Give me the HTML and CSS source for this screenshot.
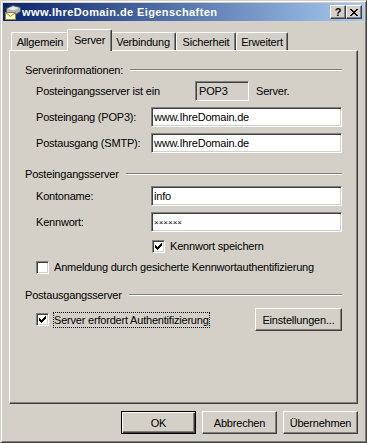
FILE: index.html
```html
<!DOCTYPE html>
<html lang="de">
<head>
<meta charset="UTF-8">
<title>www.IhreDomain.de Eigenschaften</title>
<link rel="stylesheet" href="styles.css">
</head>
<body>
<div class="window">
    <div class="titlebar">
        <svg class="app-icon" viewBox="0 0 16 16">
            <path d="M1.5 4.5 L8 1.5 L15.5 3.5 L15.5 7.5 L9 11.5 L1.5 8.5 Z" fill="#b4b4b4" stroke="#5a5a5a"/>
            <path d="M2.5 4.5 L8 2.5 L14 4 L8.5 6.5 Z" fill="#e8e8e8"/>
            <rect x="0.5" y="8.5" width="10" height="7" fill="#ffffc8" stroke="#8a8650"/>
            <path d="M0.5 8.5 L5.5 12.5 L10.5 8.5" fill="none" stroke="#8a8650"/>
        </svg>
        <span class="title">www.IhreDomain.de Eigenschaften</span>
        <div class="caption-buttons">
            <span class="cap-btn">?</span>
            <span class="cap-btn">
                <svg width="8" height="7" viewBox="0 0 8 7"><path d="M0 0h2v1h-2z M6 0h2v1h-2z M1 1h2v1h-2z M5 1h2v1h-2z M2 2h4v1h-4z M3 3h2v1h-2z M2 4h4v1h-4z M1 5h2v1h-2z M5 5h2v1h-2z M0 6h2v1h-2z M6 6h2v1h-2z" fill="#000"/></svg>
            </span>
        </div>
    </div>

    <div class="body">
        <div class="tabs">
            <div class="tab tab-general">Allgemein</div>
            <div class="tab tab-server active">Server</div>
            <div class="tab tab-conn">Verbindung</div>
            <div class="tab tab-security">Sicherheit</div>
            <div class="tab tab-advanced">Erweitert</div>
        </div>

        <div class="panel">
            <div class="group-head"><span>Serverinformationen:</span><i class="etch"></i></div>
            <div class="row info-row">
                <span class="label">Posteingangsserver ist ein</span>
                <span class="readonly">POP3</span>
                <span class="suffix">Server.</span>
            </div>
            <div class="row field-row">
                <span class="label">Posteingang (POP3):</span>
                <div class="edit">www.IhreDomain.de</div>
            </div>
            <div class="row field-row">
                <span class="label">Postausgang (SMTP):</span>
                <div class="edit">www.IhreDomain.de</div>
            </div>

            <div class="group-head"><span>Posteingangsserver</span><i class="etch"></i></div>
            <div class="row field-row">
                <span class="label">Kontoname:</span>
                <div class="edit">info</div>
            </div>
            <div class="row field-row">
                <span class="label">Kennwort:</span>
                <div class="edit"><span class="masked">××××××</span></div>
            </div>
            <div class="row check-row save-row">
                <span class="check"><svg viewBox="0 0 11 11"><path d="M8 2h1v1h-1z M7 3h2v1h-2z M2 4h1v1h-1z M6 4h3v1h-3z M2 5h2v1h-2z M5 5h3v1h-3z M2 6h5v1h-5z M3 7h3v1h-3z M4 8h1v1h-1z" fill="#000"/></svg></span>
                <span>Kennwort speichern</span>
            </div>
            <div class="row check-row spa-row">
                <span class="check"></span>
                <span>Anmeldung durch gesicherte Kennwortauthentifizierung</span>
            </div>

            <div class="group-head"><span>Postausgangsserver</span><i class="etch"></i></div>
            <div class="row auth-row">
                <span class="check"><svg viewBox="0 0 11 11"><path d="M8 2h1v1h-1z M7 3h2v1h-2z M2 4h1v1h-1z M6 4h3v1h-3z M2 5h2v1h-2z M5 5h3v1h-3z M2 6h5v1h-5z M3 7h3v1h-3z M4 8h1v1h-1z" fill="#000"/></svg></span>
                <span class="focus-label">Server erfordert Authentifizierung</span>
                <button class="btn btn-settings">Einstellungen...</button>
            </div>
        </div>

        <div class="dialog-buttons">
            <button class="btn default">OK</button>
            <button class="btn">Abbrechen</button>
            <button class="btn">Übernehmen</button>
        </div>
    </div>
</div>
</body>
</html>
```

FILE: styles.css
```css
body {
    margin: 0;
    font-family: "Liberation Sans", Arial, sans-serif;
    font-size: 11px;
    letter-spacing: -0.2px;
    color: #000;
    background-color: #d4d0c8;
}
.window {
    width: 367px;
    height: 443px;
    box-sizing: border-box;
    padding: 2px;
    background-color: #d4d0c8;
    border: 1px solid;
    border-color: #d4d0c8 #404040 #404040 #d4d0c8;
    box-shadow: inset 1px 1px #fff, inset -1px -1px #808080;
}

/* Titelleiste */
.titlebar {
    height: 18px;
    display: flex;
    align-items: center;
    padding: 0 2px;
    background: linear-gradient(to right, #0a246a, #a6caf0);
}
.app-icon {
    width: 16px;
    height: 16px;
    flex: none;
    margin-right: 1px;
}
.title {
    flex: 1;
    color: #fff;
    font-weight: bold;
    letter-spacing: 0.4px;
}
.caption-buttons {
    display: flex;
}
.cap-btn {
    width: 16px;
    height: 14px;
    box-sizing: border-box;
    display: flex;
    align-items: center;
    justify-content: center;
    background-color: #d4d0c8;
    border: 1px solid;
    border-color: #fff #404040 #404040 #fff;
    box-shadow: inset -1px -1px #808080;
    font-weight: bold;
    letter-spacing: 0;
}

/* Registerkarten */
.body {
    padding: 0 6px;
}
.tabs {
    display: flex;
    align-items: flex-end;
    height: 21px;
    margin-top: 8px;
    padding-left: 2px;
}
.tab {
    height: 18px;
    box-sizing: border-box;
    display: flex;
    align-items: center;
    justify-content: center;
    border: 1px solid;
    border-bottom: 0;
    border-color: #fff #404040 transparent #fff;
    border-radius: 2px 2px 0 0;
    box-shadow: inset -1px 0 #808080;
}
.tab.active {
    height: 22px;
    margin: 0 -2px -1px;
    padding-bottom: 2px;
    position: relative;
    z-index: 1;
    background-color: #d4d0c8;
}
.tab-general { width: 58px; }
.tab-server { width: 45px; }
.tab-conn { width: 66px; }
.tab-security { width: 60px; }
.tab-advanced { width: 52px; }

.panel {
    height: 354px;
    box-sizing: border-box;
    padding: 12px 15px 0 15px;
    border: 1px solid;
    border-color: #fff #404040 #404040 #fff;
    box-shadow: inset -1px -1px #808080;
}

/* Gruppen */
.group-head {
    display: flex;
    align-items: center;
    height: 14px;
    line-height: 14px;
    margin-top: 14px;
}
.group-head:first-child {
    margin-top: 0;
}
.etch {
    flex: 1;
    margin-left: 7px;
    border-top: 1px solid #808080;
    border-bottom: 1px solid #fff;
}
.row {
    display: flex;
    align-items: center;
    margin-left: 11px;
}
.label {
    width: 115px;
    flex: none;
}
.info-row {
    margin-top: 4px;
    height: 20px;
}
.info-row .label {
    width: 159px;
}
.field-row {
    margin-top: 6px;
    height: 20px;
}
.group-head + .field-row {
    margin-top: 5px;
}
.edit, .readonly {
    height: 20px;
    box-sizing: border-box;
    display: flex;
    align-items: center;
    padding-left: 2px;
    background-color: #fff;
    border: 1px solid;
    border-color: #808080 #fff #fff #808080;
    box-shadow: inset 1px 1px #404040, inset -1px -1px #d4d0c8;
}
.edit {
    flex: 1;
}
.readonly {
    width: 54px;
    padding-left: 3px;
    background-color: #d4d0c8;
}
.suffix {
    margin-left: 7px;
}
.masked {
    font-size: 8px;
    letter-spacing: 0;
}

/* Kontrollkästchen */
.check-row {
    height: 14px;
    margin-top: 7px;
}
.save-row {
    padding-left: 116px;
}
.check {
    width: 13px;
    height: 13px;
    flex: none;
    box-sizing: border-box;
    margin-right: 5px;
    background-color: #fff;
    border: 1px solid;
    border-color: #808080 #fff #fff #808080;
    box-shadow: inset 1px 1px #404040, inset -1px -1px #d4d0c8;
}
.check svg {
    display: block;
    width: 11px;
    height: 11px;
}
.auth-row {
    height: 23px;
    margin-top: 6px;
}
.focus-label {
    margin-left: -1px;
    line-height: 14px;
    border: 1px dotted #000;
}

/* Schaltflächen */
.btn {
    width: 75px;
    height: 23px;
    box-sizing: border-box;
    padding: 0;
    font: inherit;
    letter-spacing: inherit;
    color: #000;
    background-color: #d4d0c8;
    border: 1px solid;
    border-color: #fff #404040 #404040 #fff;
    box-shadow: inset -1px -1px #808080;
}
.btn.default {
    border-color: #000;
    box-shadow: inset 1px 1px #fff, inset -1px -1px #404040, inset -2px -2px #808080;
}
.btn-settings {
    width: 87px;
    margin-left: auto;
}
.dialog-buttons {
    display: flex;
    justify-content: flex-end;
    gap: 6px;
    margin-top: 7px;
}
```
